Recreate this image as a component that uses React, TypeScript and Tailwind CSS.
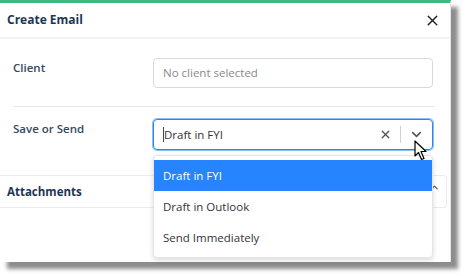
import { X, ChevronDown, ChevronUp } from "lucide-react";

const font = { fontFamily: '"Open Sans", "Liberation Sans", sans-serif' };

function App() {
  return (
    <div className="relative w-[468px] h-[276px] bg-white overflow-hidden" style={font}>
      {/* dialog */}
      <div className="w-[451px] h-[262px] bg-white border-t-[3px] border-[#3dba7e] border-r border-r-[#e6e6e6] shadow-[7px_7px_4px_rgba(0,0,0,0.45)]">
        <div className="h-[36px] flex items-center justify-between pl-[7px] pr-[9px] border-b-2 border-[#f2f2f2]">
          <div className="text-[12px] font-bold text-[#1d3557]">Create Email</div>
          <X size={17} strokeWidth={2} className="text-[#222]" />
        </div>

        <div className="px-[13px]">
          <div className="flex items-start pt-[19px] pb-[18px] border-b border-[#e8e8e8] mr-[2px]">
            <div className="w-[140px] pt-[1px] text-[11.5px] font-semibold text-[#34495e]">Client</div>
            <div className="w-[280px] h-[30px] flex items-center px-[9px] border border-[#d9d9d9] rounded-[4px] text-[11.5px] text-[#8a8a8a]">
              No client selected
            </div>
          </div>

          <div className="flex items-start pt-[12px] pb-[25px]">
            <div className="w-[140px] pt-[1px] text-[11.5px] font-semibold text-[#34495e]">Save or Send</div>
            <div className="w-[280px] h-[31px] flex items-center pl-[9px] pr-[8px] border border-[#2684ff] rounded-[4px] shadow-[0_0_0_1px_#8fbcf5]">
              <span className="w-px h-[15px] bg-[#444]" />
              <span className="flex-1 text-[11.5px] text-[#333]">Draft in FYI</span>
              <X size={13} strokeWidth={2.5} className="text-[#555]" />
              <span className="w-px h-[17px] bg-[#d0d0d0] mx-[8px]" />
              <ChevronDown size={15} strokeWidth={2.5} className="text-[#555]" />
            </div>
          </div>
        </div>

        <div className="w-[448px] h-[33px] ml-[-1px] flex items-center justify-between pl-[8px] pr-[6px] border-y border-r border-[#ececec] rounded-r-[4px]">
          <div className="text-[11.5px] font-bold text-[#1d3557]">Attachments</div>
          <ChevronUp size={11} strokeWidth={2.5} className="text-[#555] -mt-[8px]" />
        </div>
      </div>

      {/* open menu */}
      <div className="absolute left-[153px] top-[155px] w-[280px] py-[4px] bg-white rounded-[4px] border border-[#e6e6e6] shadow-[0_2px_5px_rgba(0,0,0,0.15)] text-[11.5px] text-[#333]">
        <div className="h-[31px] flex items-center px-[9px] bg-[#2684ff] text-white">Draft in FYI</div>
        <div className="h-[31px] flex items-center px-[9px]">Draft in Outlook</div>
        <div className="h-[31px] flex items-center px-[9px]">Send Immediately</div>
      </div>

      {/* mouse pointer */}
      <svg className="absolute left-[414px] top-[140px]" width="15" height="21" viewBox="0 0 15 21">
        <path d="M1 1 L1 16 L4.5 12.5 L7.5 19.5 L10 18.5 L7 11.5 L12 11.5 Z" fill="#fff" stroke="#000" strokeWidth="1.2" strokeLinejoin="round" />
      </svg>
    </div>
  );
}

export default App;
